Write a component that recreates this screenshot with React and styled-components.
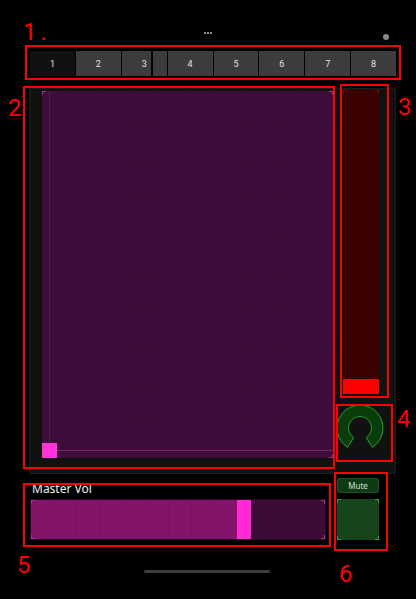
import styled, { createGlobalStyle, css } from "styled-components";

const GlobalStyle = createGlobalStyle`
  html, body {
    margin: 0;
    padding: 0;
    background: #000;
  }
  * {
    box-sizing: border-box;
  }
`;

const Screen = styled.div`
  position: relative;
  width: 416px;
  height: 599px;
  overflow: hidden;
  background: #000;
  display: flex;
  flex-direction: column;
  font-family: "Noto Sans", "Liberation Sans", sans-serif;
`;

const TopBar = styled.div`
  height: 51px;
  display: grid;
  grid-template-columns: 1fr auto 1fr;
`;

const Dots = styled.div`
  grid-column: 2;
  margin-top: 32px;
  display: flex;
  gap: 1px;
  align-self: start;
`;

const Dot = styled.span`
  width: 2px;
  height: 2px;
  border-radius: 50%;
  background: #bbb;
`;

const CameraDot = styled.span`
  grid-column: 3;
  justify-self: end;
  align-self: start;
  margin: 34px 27px 0 0;
  width: 6px;
  height: 6px;
  border-radius: 50%;
  background: #8a8a8a;
`;

const TabBar = styled.div`
  margin: 0 20px 0 30px;
  height: 25px;
  display: flex;
  gap: 1px;
  background: #000;
`;

const Tab = styled.div`
  position: relative;
  flex: 1;
  display: flex;
  align-items: center;
  justify-content: center;
  background: ${(p) => (p.$active ? "#111" : "#3c3c3c")};
  color: #e2e2e2;
  font-family: Roboto, "Noto Sans", sans-serif;
  font-size: 9px;

  ${(p) =>
    p.$split &&
    css`
      &::after {
        content: "";
        position: absolute;
        top: 0;
        bottom: 0;
        left: 29px;
        width: 2px;
        background: #000;
      }
    `}
`;

const Panel = styled.div`
  margin: 12px 20px 0 29px;
  padding: 1px 1px 12px 12px;
  display: flex;
  gap: 3px;
  background: #111;
  border: 1px solid #1c1c1c;
`;

const Corner = styled.span`
  position: absolute;
  width: 4px;
  height: 4px;
  border-color: ${(p) => p.$color};
  border-style: solid;
  border-width: 0;
  ${(p) => (p.$v === "t" ? "top: 0; border-top-width: 1px;" : "bottom: 0; border-bottom-width: 1px;")}
  ${(p) => (p.$h === "l" ? "left: 0; border-left-width: 1px;" : "right: 0; border-right-width: 1px;")}
`;

function Corners({ color, only }) {
  const all = ["tl", "tr", "bl", "br"];
  return (
    <>
      {(only || all).map((c) => (
        <Corner key={c} $v={c[0]} $h={c[1]} $color={color} />
      ))}
    </>
  );
}

const XYPad = styled.div`
  position: relative;
  margin-top: 1px;
  width: 291px;
  height: 367px;
  background-color: #3f0d3a;
  background-image: repeating-linear-gradient(
      90deg,
      transparent 0 28px,
      rgba(0, 0, 0, 0.08) 28px 29px
    ),
    repeating-linear-gradient(
      0deg,
      transparent 0 36px,
      rgba(0, 0, 0, 0.05) 36px 37px
    );
`;

const CrossV = styled.div`
  position: absolute;
  top: 0;
  bottom: 0;
  left: 7px;
  width: 1px;
  background: #581752;
`;

const CrossH = styled.div`
  position: absolute;
  left: 0;
  right: 0;
  bottom: 7px;
  height: 1px;
  background: #7a2372;
`;

const PadThumb = styled.div`
  position: absolute;
  left: 0;
  bottom: 0;
  width: 15px;
  height: 15px;
  background: #ff33d8;
`;

const SideColumn = styled.div`
  width: 58px;
  display: flex;
  flex-direction: column;
  gap: 11px;
`;

const VSlider = styled.div`
  position: relative;
  margin-left: 7px;
  width: 36px;
  height: 304px;
  background: #3b0000;
  display: flex;
  flex-direction: column;
  justify-content: flex-end;
`;

const VFill = styled.div`
  height: 15px;
  background: #ff0000;
`;

const KnobBox = styled.div`
  height: 56px;
  display: flex;
`;

const BottomRow = styled.div`
  margin: 4px 0 0 30px;
  display: flex;
  gap: 11px;
`;

const VolColumn = styled.div`
  width: 296px;
  display: flex;
  flex-direction: column;
`;

const VolLabel = styled.div`
  height: 21px;
  padding: 0 0 3px 2px;
  display: flex;
  align-items: flex-end;
  color: #f0f0f0;
  font-size: 12px;
  line-height: 14px;
`;

const HSlider = styled.div`
  position: relative;
  height: 41px;
  display: flex;
  border: 1px solid #2a0925;
  background: #3d0b35;
`;

const HFill = styled.div`
  width: 206px;
  background-color: #84146a;
  background-image: repeating-linear-gradient(
    90deg,
    transparent 0 22px,
    rgba(0, 0, 0, 0.07) 22px 23px
  );
`;

const HThumb = styled.div`
  width: 14px;
  background: #ff2ad6;
`;

const MuteColumn = styled.div`
  width: 42px;
  display: flex;
  flex-direction: column;
  gap: 6px;
`;

const MuteButton = styled.div`
  height: 15px;
  display: flex;
  align-items: center;
  justify-content: center;
  background: #0f3a15;
  border: 1px solid #1c5222;
  border-radius: 2px;
  color: #cfe0cf;
  font-size: 8px;
`;

const MutePad = styled.div`
  position: relative;
  height: 41px;
  background: #17451b;
`;

const HomeIndicator = styled.div`
  margin: 30px 0 0 144px;
  width: 126px;
  height: 3px;
  border-radius: 2px;
  background: #3c3c3c;
`;

const Mark = styled.div`
  position: absolute;
  left: ${(p) => p.$x}px;
  top: ${(p) => p.$y}px;
  width: ${(p) => p.$w}px;
  height: ${(p) => p.$h}px;
  border: 2px solid #ff0000;
  pointer-events: none;
`;

const MarkLabel = styled.div`
  position: absolute;
  left: ${(p) => p.$x}px;
  top: ${(p) => p.$y}px;
  color: #ff0000;
  font-family: Roboto, "Liberation Sans", sans-serif;
  font-size: 24px;
  line-height: 24px;
  letter-spacing: ${(p) => p.$ls || 0}px;
`;

// knob arc, gap at the bottom
const CX = 24;
const CY = 23;
const RO = 23;
const RI = 11.5;
const pt = (deg, r) => {
  const a = (deg * Math.PI) / 180;
  return `${(CX + r * Math.sin(a)).toFixed(2)} ${(CY - r * Math.cos(a)).toFixed(2)}`;
};
const A0 = 180 + 33;
const A1 = 180 - 33;
const knobPath = `M ${pt(A0, RO)} A ${RO} ${RO} 0 1 1 ${pt(A1, RO)} L ${pt(A1, RI)} A ${RI} ${RI} 0 1 0 ${pt(A0, RI)} Z`;

function Knob() {
  return (
    <svg width="58" height="56" viewBox="0 0 58 56">
      <path d={knobPath} fill="#0a3d0b" stroke="#22a526" strokeWidth="1" />
    </svg>
  );
}

const marks = [
  { x: 25, y: 45, w: 376, h: 35 },
  { x: 23, y: 86, w: 312, h: 383 },
  { x: 340, y: 84, w: 49, h: 314 },
  { x: 336, y: 404, w: 57, h: 58 },
  { x: 23, y: 483, w: 308, h: 64 },
  { x: 334, y: 472, w: 54, h: 79 },
];

const labels = [
  { t: "1.", x: 23, y: 20, ls: 4 },
  { t: "2", x: 8, y: 96 },
  { t: "3", x: 398, y: 95 },
  { t: "4", x: 397, y: 407 },
  { t: "5", x: 17, y: 553 },
  { t: "6", x: 339, y: 562 },
];

export default function App() {
  return (
    <>
      <GlobalStyle />
      <Screen>
        <TopBar>
          <Dots>
            <Dot />
            <Dot />
            <Dot />
          </Dots>
          <CameraDot />
        </TopBar>

        <TabBar>
          {["1", "2", "3", "4", "5", "6", "7", "8"].map((t) => (
            <Tab key={t} $active={t === "1"} $split={t === "3"}>
              {t}
            </Tab>
          ))}
        </TabBar>

        <Panel>
          <XYPad>
            <CrossV />
            <CrossH />
            <PadThumb />
            <Corners color="#a0308f" only={["tl", "tr", "br"]} />
          </XYPad>
          <SideColumn>
            <VSlider>
              <VFill />
              <Corners color="#8a0000" only={["tl", "tr"]} />
            </VSlider>
            <KnobBox>
              <Knob />
            </KnobBox>
          </SideColumn>
        </Panel>

        <BottomRow>
          <VolColumn>
            <VolLabel>Master Vol</VolLabel>
            <HSlider>
              <HFill />
              <HThumb />
              <Corners color="#a83096" />
            </HSlider>
          </VolColumn>
          <MuteColumn>
            <MuteButton>Mute</MuteButton>
            <MutePad>
              <Corners color="#3c9a40" />
            </MutePad>
          </MuteColumn>
        </BottomRow>

        <HomeIndicator />

        {marks.map((m, i) => (
          <Mark key={i} $x={m.x} $y={m.y} $w={m.w} $h={m.h} />
        ))}
        {labels.map((l) => (
          <MarkLabel key={l.t} $x={l.x} $y={l.y} $ls={l.ls}>
            {l.t}
          </MarkLabel>
        ))}
      </Screen>
    </>
  );
}
